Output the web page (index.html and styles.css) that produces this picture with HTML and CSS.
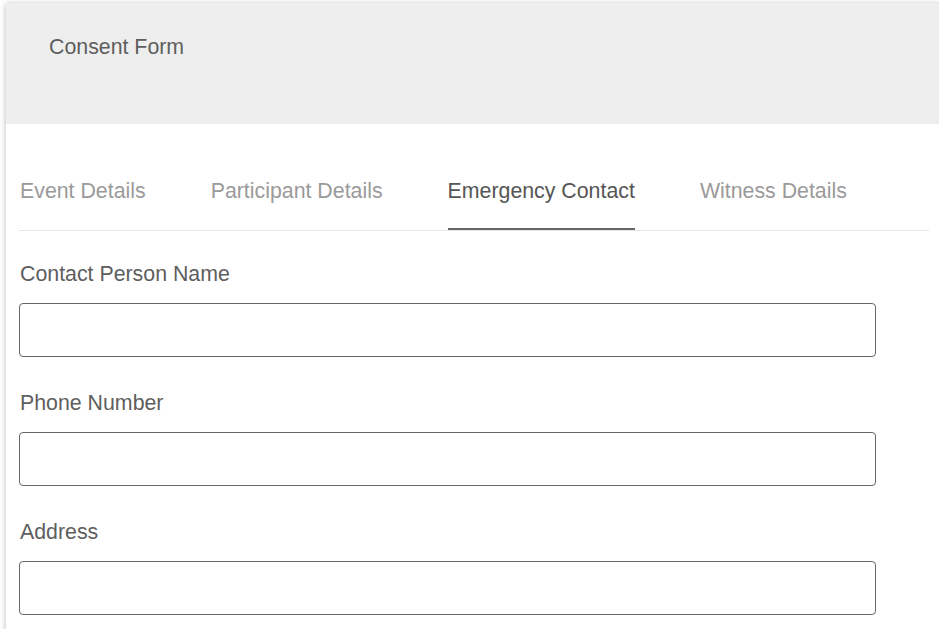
FILE: index.html
```html
<!DOCTYPE html>
<html lang="en">
<head>
<meta charset="utf-8">
<title>Consent Form</title>
<link rel="stylesheet" href="styles.css">
</head>
<body>
<div class="card">
  <header class="card-header">
    <h1 class="title">Consent Form</h1>
  </header>
  <div class="card-body">
    <nav class="tabs">
      <a class="tab">Event Details</a>
      <a class="tab">Participant Details</a>
      <a class="tab active">Emergency Contact</a>
      <a class="tab">Witness Details</a>
    </nav>
    <form class="form">
      <div class="field">
        <label class="label" for="name">Contact Person Name</label>
        <input class="input" id="name" type="text">
      </div>
      <div class="field">
        <label class="label" for="phone">Phone Number</label>
        <input class="input" id="phone" type="text">
      </div>
      <div class="field">
        <label class="label" for="address">Address</label>
        <input class="input" id="address" type="text">
      </div>
    </form>
  </div>
</div>
</body>
</html>
```

FILE: styles.css
```css
html, body {
  margin: 0;
  padding: 0;
  overflow: hidden;
  background: #ffffff;
}

body {
  font-family: "Liberation Sans", Arial, sans-serif;
  font-size: 21.33px;
  line-height: 24px;
  color: #5e5e5e;
}

.card {
  margin: 3px 0 0 6px;
  width: 936px;
  background: #ffffff;
  box-shadow: 0 1px 6px rgba(0, 0, 0, 0.28);
}

.card-header {
  background: #eeeeee;
  height: 121px;
  box-sizing: border-box;
  padding: 32px 0 0 43px;
}

.title {
  margin: 0;
  font-size: 21.33px;
  font-weight: normal;
  line-height: 24px;
  color: #5e5e5e;
}

.card-body {
  padding: 55px 13px 60px 13px;
}

.tabs {
  display: flex;
  gap: 65px;
  padding-left: 1px;
  border-bottom: 1px solid #e6e6e6;
}

.tab {
  display: block;
  padding-bottom: 25px;
  border-bottom: 2px solid transparent;
  color: #9a9a9a;
  cursor: pointer;
}

.tab.active {
  color: #555555;
  border-bottom-color: #666666;
}

.form {
  padding-top: 31px;
  display: flex;
  flex-direction: column;
  gap: 34px;
}

.field {
  display: flex;
  flex-direction: column;
}

.label {
  display: block;
  margin-bottom: 17px;
  padding-left: 1px;
  color: #5e5e5e;
}

.input {
  display: block;
  box-sizing: border-box;
  width: 857px;
  height: 54px;
  margin: 0;
  border: 1px solid #666666;
  border-radius: 4px;
  background: #ffffff;
  font: inherit;
  padding: 0 12px;
  outline: none;
}
```
